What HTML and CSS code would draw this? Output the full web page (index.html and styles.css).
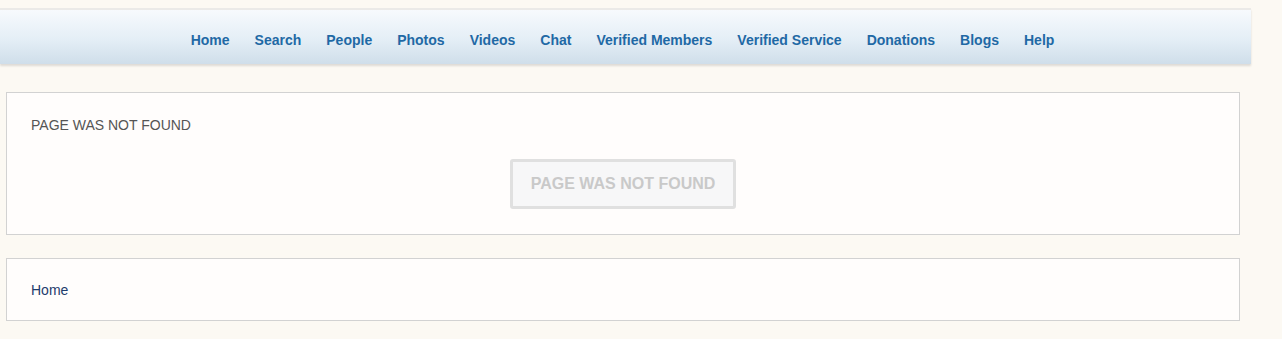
FILE: index.html
```html
<!DOCTYPE html>
<html lang="en">
<head>
    <meta charset="UTF-8">
    <title>Page not found</title>
    <link rel="stylesheet" href="styles.css">
</head>
<body>
    <!-- Top navigation -->
    <div class="topbar">
        <a href="#">Home</a>
        <a href="#">Search</a>
        <a href="#">People</a>
        <a href="#">Photos</a>
        <a href="#">Videos</a>
        <a href="#">Chat</a>
        <a href="#">Verified Members</a>
        <a href="#">Verified Service</a>
        <a href="#">Donations</a>
        <a href="#">Blogs</a>
        <a href="#">Help</a>
    </div>

    <div class="content">
        <div class="panel error-panel">
            <div class="panel-title">PAGE WAS NOT FOUND</div>
            <div class="notice">
                <span class="notice-box">PAGE WAS NOT FOUND</span>
            </div>
        </div>

        <div class="panel crumbs">
            <a href="#">Home</a>
        </div>
    </div>
</body>
</html>
```

FILE: styles.css
```css
/* General styling */
body {
    font-family: "Liberation Sans", Arial, sans-serif;
    margin: 0;
    padding-top: 8px;
    background-color: #fcf9f3;
}
/* Top bar */
.topbar {
    width: 1245px;
    height: 54px;
    padding-right: 6px;
    border-top: 2px solid #ebeae8;
    background: linear-gradient(to bottom, #f7fafd 0%, #e4eef6 55%, #cfdeea 100%);
    box-shadow: 0 2px 2px rgba(0, 0, 0, 0.12);
    display: flex;
    justify-content: center;
    align-items: center;
    gap: 25px;
}
.topbar a {
    color: #1f69a5;
    font-size: 14px;
    font-weight: bold;
    text-decoration: none;
    padding-top: 6px;
}
/* Content panels */
.content {
    width: 1234px;
    margin-left: 6px;
    padding-top: 28px;
}
.panel {
    background-color: #fffdfc;
    border: 1px solid #d2d2d2;
    padding: 0 24px;
}
.error-panel {
    padding-top: 23px;
    padding-bottom: 25px;
}
.panel-title {
    color: #555555;
    font-size: 14px;
    line-height: 18px;
}
.notice {
    display: flex;
    justify-content: center;
    margin-top: 25px;
}
.notice-box {
    display: block;
    box-sizing: border-box;
    width: 226px;
    height: 50px;
    line-height: 44px;
    text-align: center;
    border: 3px solid #e0e0e0;
    border-radius: 3px;
    background-color: #f7f7f8;
    color: #c9c9c9;
    font-size: 16px;
    font-weight: bold;
}
.crumbs {
    margin-top: 23px;
    height: 61px;
    display: flex;
    align-items: center;
}
.crumbs a {
    color: #1e3c6c;
    font-size: 14px;
    text-decoration: none;
}
```
